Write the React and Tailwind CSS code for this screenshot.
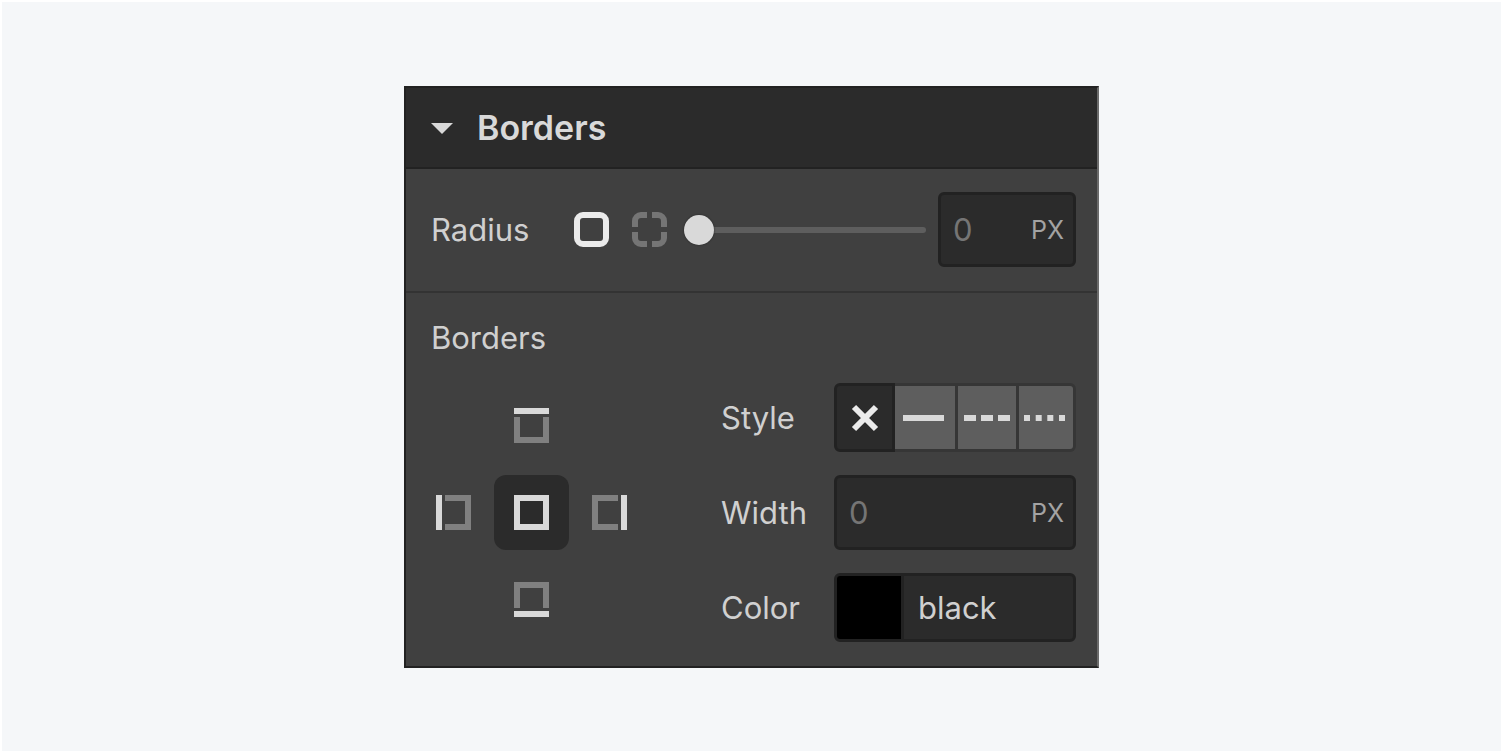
import { useState } from 'react';

const SIDES = {
  top: { light: 'M0 0h35v6H0z', dim: 'M0 9h6v20h23V9h6v26H0z' },
  bottom: { light: 'M0 29h35v6H0z', dim: 'M0 0h35v26h-6V6H6v20H0z' },
  left: { light: 'M0 0h6v35H0z', dim: 'M9 0h26v35H9v-6h20V6H9z' },
  right: { light: 'M29 0h6v35h-6z', dim: 'M0 0h26v6H6v23h20v6H0z' },
  all: { light: 'M0 0h35v35H0zM6 6v23h23V6z', dim: '' },
};

function SideButton({ side, place, selected, onClick }) {
  return (
    <button
      type="button"
      aria-label={`Border ${side}`}
      aria-pressed={selected}
      onClick={() => onClick(side)}
      className={`flex h-[75px] w-[75px] items-center justify-center rounded-xl ${place} ${
        selected ? 'bg-[#2b2b2b]' : ''
      }`}
    >
      <svg width="35" height="35" viewBox="0 0 35 35" fillRule="evenodd">
        <path d={SIDES[side].dim} fill="#808080" />
        <path d={SIDES[side].light} fill="#d9d9d9" />
      </svg>
    </button>
  );
}

function StyleButton({ label, value, selected, onClick, className, children }) {
  return (
    <button
      type="button"
      aria-label={label}
      aria-pressed={selected}
      onClick={() => onClick(value)}
      className={`flex items-center justify-center border-y-[3px] ${className} ${
        selected
          ? 'border-[#222222] bg-[#2b2b2b]'
          : 'border-[#363636] bg-[#5e5e5e]'
      }`}
    >
      {children}
    </button>
  );
}

function PxInput({ id, label, value, onChange }) {
  return (
    <div className="flex h-[75px] w-full items-center rounded-md border-[3px] border-[#222222] bg-[#2b2b2b] pr-[9px] pl-3">
      <input
        id={id}
        aria-label={label}
        type="text"
        value={value}
        onChange={(e) => onChange(e.target.value)}
        className="w-full min-w-0 flex-1 bg-transparent text-[31px] text-[#757575] outline-none"
      />
      <span className="text-[25px] text-[#a3a3a3]">PX</span>
    </div>
  );
}

export default function App() {
  const [open, setOpen] = useState(true);
  const [corners, setCorners] = useState('all');
  const [radius, setRadius] = useState('0');
  const [side, setSide] = useState('all');
  const [style, setStyle] = useState('none');
  const [width, setWidth] = useState('0');
  const [color, setColor] = useState('black');

  return (
    <main className="flex min-h-screen items-start justify-center border-t-2 border-l-2 border-white bg-[#f5f7f9] py-[84px] font-['Inter',sans-serif]">
      <section className="w-full max-w-[695px] border-2 border-[#222222] border-r-[#6b6b6b] bg-[#404040] text-[31px] leading-10 text-[#d0d0d0]">
        <h2 className="border-b-2 border-[#222222] bg-[#2b2b2b]">
          <button
            type="button"
            aria-expanded={open}
            onClick={() => setOpen(!open)}
            className="flex h-[79px] w-full items-center gap-6 px-[25px] text-[34px] font-semibold text-[#d9d9d9]"
          >
            <svg width="22" height="12" viewBox="0 0 22 12">
              <path d="M0 1h22L11 12z" fill="#d9d9d9" />
            </svg>
            Borders
          </button>
        </h2>

        {open && (
          <>
            {/* radius */}
            <div className="flex items-center border-b-2 border-[#333333] pt-[23px] pr-[21px] pb-6 pl-[25px]">
              <label htmlFor="radius" className="w-[143px]">
                Radius
              </label>
              <div className="flex gap-[23px]">
                <button
                  type="button"
                  aria-label="All corners"
                  aria-pressed={corners === 'all'}
                  onClick={() => setCorners('all')}
                >
                  <svg width="35" height="35" viewBox="0 0 35 35" fill="none">
                    <rect x="3" y="3" width="29" height="29" rx="6" stroke="#ebebeb" strokeWidth="6" />
                  </svg>
                </button>
                <button
                  type="button"
                  aria-label="Individual corners"
                  aria-pressed={corners === 'each'}
                  onClick={() => setCorners('each')}
                >
                  <svg width="35" height="35" viewBox="0 0 35 35" fill="none">
                    <path
                      d="M3 15V9a6 6 0 0 1 6-6h6M20 3h6a6 6 0 0 1 6 6v6M32 20v6a6 6 0 0 1-6 6h-6M15 32H9a6 6 0 0 1-6-6v-6"
                      stroke="#757575"
                      strokeWidth="6"
                    />
                  </svg>
                </button>
              </div>
              <input
                id="radius"
                type="range"
                min="0"
                max="100"
                value={Number(radius) || 0}
                onChange={(e) => setRadius(e.target.value)}
                className="mr-3 ml-[17px] h-[30px] min-w-0 flex-1 appearance-none bg-transparent [&::-webkit-slider-runnable-track]:h-[6px] [&::-webkit-slider-runnable-track]:rounded-full [&::-webkit-slider-runnable-track]:bg-[#5e5e5e] [&::-webkit-slider-thumb]:-mt-3 [&::-webkit-slider-thumb]:h-[30px] [&::-webkit-slider-thumb]:w-[30px] [&::-webkit-slider-thumb]:appearance-none [&::-webkit-slider-thumb]:rounded-full [&::-webkit-slider-thumb]:bg-[#d9d9d9] [&::-webkit-slider-thumb]:shadow-[0_0_2px_#222222]"
              />
              <div className="w-[138px]">
                <PxInput id="radius-value" label="Radius value" value={radius} onChange={setRadius} />
              </div>
            </div>

            {/* borders */}
            <div className="pt-[25px] pr-[21px] pb-6 pl-[25px]">
              <h3>Borders</h3>
              <div className="mt-[25px] flex justify-between">
                <div className="mt-[5px] -ml-[15px] grid grid-cols-3 content-start gap-x-[3px] gap-y-3">
                  <SideButton side="top" place="col-start-2" selected={side === 'top'} onClick={setSide} />
                  <SideButton side="left" place="col-start-1" selected={side === 'left'} onClick={setSide} />
                  <SideButton side="all" place="col-start-2" selected={side === 'all'} onClick={setSide} />
                  <SideButton side="right" place="col-start-3" selected={side === 'right'} onClick={setSide} />
                  <SideButton side="bottom" place="col-start-2" selected={side === 'bottom'} onClick={setSide} />
                </div>

                <div className="grid grid-cols-[113px_242px] items-center gap-y-[23px]">
                  <span id="style-label">Style</span>
                  <div role="group" aria-labelledby="style-label" className="flex h-[69px]">
                    <StyleButton
                      label="None"
                      value="none"
                      selected={style === 'none'}
                      onClick={setStyle}
                      className="w-[61px] rounded-l-md border-x-[3px]"
                    >
                      <svg width="28" height="28" viewBox="0 0 28 28">
                        <path d="M3 3l22 22M25 3L3 25" stroke="#ebebeb" strokeWidth="6" />
                      </svg>
                    </StyleButton>
                    <StyleButton
                      label="Solid"
                      value="solid"
                      selected={style === 'solid'}
                      onClick={setStyle}
                      className="w-[63px] border-r-[3px] pr-[3px]"
                    >
                      <svg width="41" height="6" viewBox="0 0 41 6">
                        <path d="M0 0h41v6H0z" fill="#d9d9d9" />
                      </svg>
                    </StyleButton>
                    <StyleButton
                      label="Dashed"
                      value="dashed"
                      selected={style === 'dashed'}
                      onClick={setStyle}
                      className="w-[61px] border-r-[3px]"
                    >
                      <svg width="46" height="6" viewBox="0 0 46 6">
                        <path d="M0 0h12v6H0zM17 0h12v6H17zM34 0h12v6H34z" fill="#d9d9d9" />
                      </svg>
                    </StyleButton>
                    <StyleButton
                      label="Dotted"
                      value="dotted"
                      selected={style === 'dotted'}
                      onClick={setStyle}
                      className="flex-1 rounded-r-md border-r-[3px] pr-[3px]"
                    >
                      <svg width="41" height="6" viewBox="0 0 41 6">
                        <path
                          d="M0 0h6v6H0zM11.7 0h6v6h-6zM23.3 0h6v6h-6zM35 0h6v6h-6z"
                          fill="#d9d9d9"
                        />
                      </svg>
                    </StyleButton>
                  </div>

                  <label htmlFor="width">Width</label>
                  <PxInput id="width" value={width} onChange={setWidth} />

                  <label htmlFor="color">Color</label>
                  <div className="flex h-[69px] overflow-hidden rounded-md border-[3px] border-[#222222] bg-[#2b2b2b]">
                    <button
                      type="button"
                      aria-label="Pick color"
                      className="w-[67px] shrink-0 border-r-[3px] border-[#222222]"
                      style={{ backgroundColor: color }}
                    ></button>
                    <input
                      id="color"
                      type="text"
                      value={color}
                      onChange={(e) => setColor(e.target.value)}
                      className="w-full min-w-0 bg-transparent px-[14px] outline-none"
                    />
                  </div>
                </div>
              </div>
            </div>
          </>
        )}
      </section>
    </main>
  );
}
